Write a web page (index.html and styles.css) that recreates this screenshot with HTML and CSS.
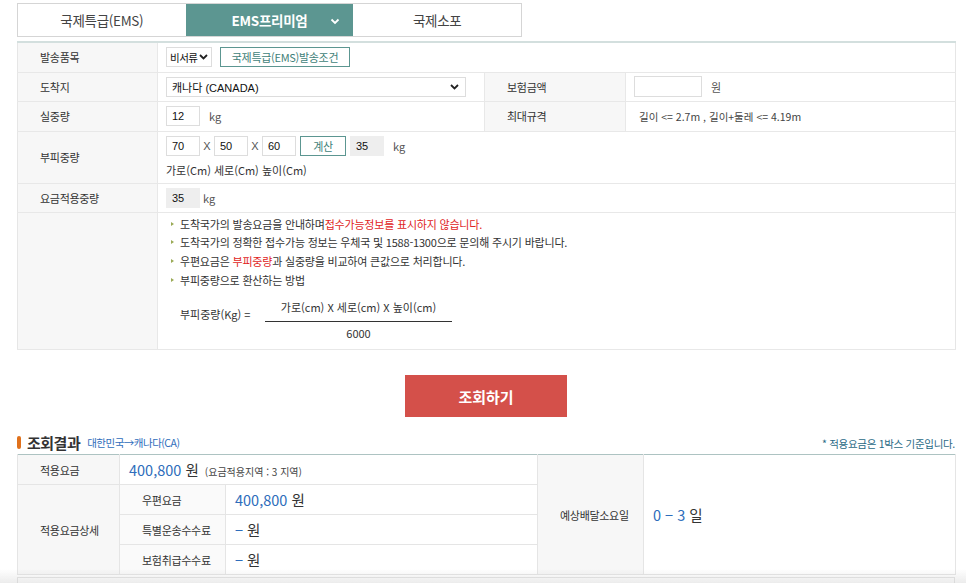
FILE: index.html
```html
<!DOCTYPE html>
<html lang="ko">
<head>
<meta charset="utf-8">
<title>EMS 요금조회</title>
<link rel="stylesheet" href="styles.css">
</head>
<body>
<div class="page">
  <div class="tabs">
    <div class="tab">국제특급(EMS)</div>
    <div class="tab active">EMS프리미엄
      <svg class="chev" width="10" height="7" viewBox="0 0 10 7"><path d="M1.5 1.5 L5 5 L8.5 1.5" fill="none" stroke="#fff" stroke-width="1.8"/></svg>
    </div>
    <div class="tab">국제소포</div>
  </div>

  <table class="form">
    <colgroup><col class="c1"><col class="c2"><col class="c3"><col class="c4"></colgroup>
    <tr class="r30">
      <th>발송품목</th>
      <td colspan="3">
        <div class="line">
          <span class="sel small">비서류 <svg width="9" height="6" viewBox="0 0 9 6"><path d="M1 1 L4.5 4.5 L8 1" fill="none" stroke="#222" stroke-width="1.8"/></svg></span>
          <span class="tbtn wide">국제특급(EMS)발송조건</span>
        </div>
      </td>
    </tr>
    <tr class="r29">
      <th>도착지</th>
      <td>
        <span class="sel full">캐나다 (CANADA) <svg width="9" height="6" viewBox="0 0 9 6"><path d="M1 1 L4.5 4.5 L8 1" fill="none" stroke="#222" stroke-width="1.8"/></svg></span>
      </td>
      <th class="lb">보험금액</th>
      <td><div class="line"><span class="inp w68"></span><span class="unit">원</span></div></td>
    </tr>
    <tr class="r30">
      <th>실중량</th>
      <td><div class="line"><span class="inp">12</span><span class="unit">kg</span></div></td>
      <th class="lb">최대규격</th>
      <td class="spec">길이 &lt;= 2.7m , 길이+둘레 &lt;= 4.19m</td>
    </tr>
    <tr class="r52">
      <th>부피중량</th>
      <td colspan="3">
        <div class="line">
          <span class="inp">70</span><span class="x">X</span>
          <span class="inp">50</span><span class="x">X</span>
          <span class="inp">60</span>
          <span class="tbtn calc">계산</span>
          <span class="inp grey">35</span>
          <span class="unit">kg</span>
        </div>
        <div class="dims">가로(Cm) 세로(Cm) 높이(Cm)</div>
      </td>
    </tr>
    <tr class="r29">
      <th>요금적용중량</th>
      <td colspan="3"><div class="line"><span class="inp grey">35</span><span class="unit tight">kg</span></div></td>
    </tr>
    <tr>
      <th></th>
      <td colspan="3" class="notes">
        <ul>
          <li>도착국가의 발송요금을 안내하며<em>접수가능정보를 표시하지 않습니다.</em></li>
          <li>도착국가의 정확한 접수가능 정보는 우체국 및 1588-1300으로 문의해 주시기 바랍니다.</li>
          <li>우편요금은 <em>부피중량</em>과 실중량을 비교하여 큰값으로 처리합니다.</li>
          <li>부피중량으로 환산하는 방법</li>
        </ul>
        <div class="formula">
          <span class="flabel">부피중량(Kg) =</span>
          <div class="frac">
            <div class="num">가로(cm) X 세로(cm) X 높이(cm)</div>
            <div class="den">6000</div>
          </div>
        </div>
      </td>
    </tr>
  </table>

  <div class="btnrow"><button class="search">조회하기</button></div>

  <div class="reshead">
    <div class="title"><span class="bullet"></span><h2>조회결과</h2><span class="route">대한민국→캐나다(CA)</span></div>
    <div class="note">* 적용요금은 1박스 기준입니다.</div>
  </div>

  <table class="result">
    <colgroup><col class="rc1"><col class="rc2"><col class="rc3"><col class="rc4"><col class="rc5"></colgroup>
    <tr>
      <th>적용요금</th>
      <td colspan="2" class="amt"><span class="blue">400,800</span> 원 <small>(요금적용지역 : 3 지역)</small></td>
      <th rowspan="4">예상배달소요일</th>
      <td rowspan="4" class="amt days"><span class="blue">0 − 3</span> 일</td>
    </tr>
    <tr>
      <th rowspan="3">적용요금상세</th>
      <th class="sub">우편요금</th>
      <td class="amt"><span class="blue">400,800</span> 원</td>
    </tr>
    <tr>
      <th class="sub">특별운송수수료</th>
      <td class="amt"><span class="blue">−</span> 원</td>
    </tr>
    <tr>
      <th class="sub">보험취급수수료</th>
      <td class="amt"><span class="blue">−</span> 원</td>
    </tr>
  </table>
  <div class="nextbox"></div>
</div>
<div class="fade"></div>
</body>
</html>
```
FILE: styles.css
```css
* { box-sizing: border-box; }
html, body { margin: 0; padding: 0; background: #fff; }
body {
  font-family: "Noto Sans CJK KR", "Noto Sans", sans-serif;
  color: #333;
  font-size: 11px;
  overflow: hidden;
  height: 583px;
}
.page { padding: 3px 11px 0 17px; width: 966px; }

.tabs { display: flex; width: 505px; height: 34px; border: 1px solid #d5d5d5; }
.tab {
  width: 168px; display: flex; align-items: center; justify-content: center;
  font-size: 13.5px; color: #444; position: relative; letter-spacing: -0.3px;
}
.tab + .tab { border-left: 1px solid #d5d5d5; }
.tab.active { background: #5c9691; color: #fff; font-weight: 700; border-left: 0; }
.tab.active + .tab { border-left: 0; }
.chev { position: absolute; right: 13px; top: 14px; }

table { border-collapse: collapse; table-layout: fixed; }
.form {
  width: 938px; margin-top: 4px;
  border-top: 2px solid #d3dfde; border-left: 1px solid #e6e6e6; border-right: 1px solid #e6e6e6;
}
.form col.c1 { width: 140px; }
.form col.c2 { width: 327px; }
.form col.c3 { width: 141px; }
.form col.c4 { width: 330px; }
.form th {
  background: #f7f7f7; font-weight: 400; text-align: left; padding: 0 0 0 22px;
  color: #333; border-bottom: 1px solid #e8e8e8; border-right: 1px solid #e8e8e8;
  letter-spacing: -0.3px;
}
.form th.lb { border-left: 1px solid #e8e8e8; }
.form td { padding: 0 0 0 8px; border-bottom: 1px solid #e8e8e8; vertical-align: middle; }
.r30 { height: 30px; }
.r29 { height: 29px; }
.r52 { height: 52px; }
.line { display: flex; align-items: center; height: 20px; white-space: nowrap; }
.sel {
  display: inline-flex; align-items: center; justify-content: space-between;
  height: 20px; border: 1px solid #ddd; padding: 0 3px 0 3px; font-size: 10.5px; color: #111;
  white-space: nowrap; letter-spacing: -0.5px;
}
.sel.small { width: 46px; }
.sel.full { width: 300px; font-family: "Liberation Sans", "Noto Sans CJK KR", sans-serif; font-size: 11px; padding-left: 5px; padding-right: 6px; letter-spacing: 0; }
.tbtn {
  display: inline-flex; align-items: center; justify-content: center;
  height: 20px; border: 1px solid #5c9691; color: #3f7f79; font-size: 11px; letter-spacing: -0.3px;
}
.tbtn.wide { width: 130px; margin-left: 8px; }
.tbtn.calc { width: 46px; margin-left: 4px; }
.inp {
  display: inline-flex; align-items: center; width: 34px; height: 20px;
  border: 1px solid #ddd; padding-left: 5px; font-size: 11px; color: #111;
  font-family: "Liberation Sans", sans-serif;
}
.inp.w68 { width: 68px; height: 21px; }
.inp.grey { background: #eeeeee; border-color: #eeeeee; margin-left: 4px; }
td > .line > .inp.grey:first-child { margin-left: 0; }
.unit { margin-left: 9px; color: #555; }
.unit.tight { margin-left: 3px; }
.x { width: 14px; text-align: center; color: #555; font-family: "Liberation Sans", sans-serif; }
.dims { margin-top: 6px; font-size: 11px; color: #333; }
.spec { color: #444; font-size: 10.5px; padding-left: 13px !important; }

.notes { padding: 2px 0 8px 9px !important; vertical-align: top !important; }
.notes ul { list-style: none; margin: 0; padding: 0; }
.notes li { position: relative; padding-left: 13px; font-size: 11px; line-height: 18.7px; color: #333; letter-spacing: -0.2px; }
.notes li::before {
  content: ""; position: absolute; left: 4px; top: 7px; width: 0; height: 0;
  border-left: 3px solid #9aaa56; border-top: 2.5px solid transparent; border-bottom: 2.5px solid transparent;
}
.notes em { font-style: normal; color: #e02424; }
.formula { display: flex; align-items: flex-start; margin-top: 10px; padding-left: 13px; }
.flabel { font-size: 11px; width: 85px; margin-top: 7px; }
.frac { width: 187px; text-align: center; }
.num { border-bottom: 1px solid #333; padding-bottom: 6px; font-size: 11px; line-height: 16px; }
.den { padding-top: 3px; font-size: 11px; line-height: 16px; }

.btnrow { display: flex; justify-content: center; padding: 25px 0 0 0; width: 938px; }
.search {
  width: 162px; height: 42px; background: #d4504a; border: 0; color: #fff;
  font-family: "Noto Sans CJK KR", sans-serif; font-size: 15px; font-weight: 700; padding: 0;
}

.reshead { display: flex; justify-content: space-between; align-items: flex-end; width: 938px; margin-top: 16px; height: 20px; }
.title { display: flex; align-items: center; }
.bullet { width: 4px; height: 13px; background: #e0711c; border-radius: 2px; margin-right: 6px; }
.title h2 { margin: 0; font-size: 15px; font-weight: 700; color: #333; letter-spacing: -0.5px; }
.route { margin-left: 7px; color: #2e6dbb; font-size: 10.5px; letter-spacing: -0.5px; }
.note { color: #2a6a86; font-size: 10.5px; padding-bottom: 2px; letter-spacing: -0.3px; }

.result {
  width: 938px; margin-top: 1px; border-top: 1px solid #adc3c2;
  border-left: 1px solid #e3e3e3; border-right: 1px solid #e3e3e3;
}
.result col.rc1 { width: 102px; }
.result col.rc2 { width: 106px; }
.result col.rc3 { width: 312px; }
.result col.rc4 { width: 106px; }
.result col.rc5 { width: 312px; }
.result tr { height: 30px; }
.result th {
  background: #f7f7f7; font-weight: 400; font-size: 11px; color: #333;
  border: 1px solid #e5e5e5; border-top: 0; text-align: left; padding-left: 22px; letter-spacing: -0.3px;
}
.result th.sub { background: #fafafa; }
.result td { border: 1px solid #e5e5e5; border-top: 0; padding-left: 9px; }
.amt { font-size: 14.5px; color: #333; }
.amt .blue { color: #2e6dbb; }
.amt small { font-size: 10px; color: #444; margin-left: 2px; }
.days { padding-left: 9px; }
.nextbox { width: 938px; height: 10px; margin-top: 2px; border: 1px solid #e3e3e3; border-bottom: 0; }
.fade {
  position: fixed; left: 0; right: 0; bottom: 0; height: 14px;
  background: linear-gradient(to bottom, rgba(200,200,200,0), rgba(200,200,200,0.35));
  pointer-events: none;
}
```
